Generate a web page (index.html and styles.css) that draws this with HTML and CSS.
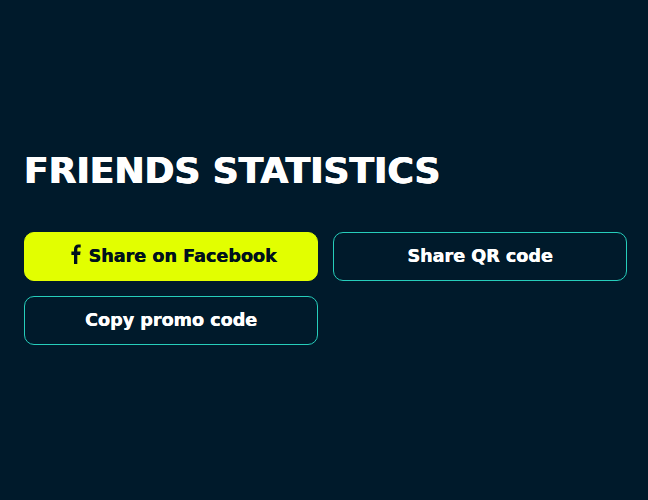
FILE: index.html
```html
<!DOCTYPE html>
<html lang="en">
<head>
  <meta charset="UTF-8">
  <title>Friends Statistics</title>
  <link rel="stylesheet" href="styles.css">
</head>
<body>
  <div class="container">
    <h1>FRIENDS STATISTICS</h1>
    <div class="actions">
      <button class="btn btn-primary">
        <svg class="icon" viewBox="0 0 10 20" width="10" height="20" aria-hidden="true">
          <path d="M3 20V11H0.4V7.6H3V5.2C3 2 4.8 0.4 7.4 0.4C8.5 0.4 9.4 0.5 9.7 0.6V3.6H8C6.7 3.6 6.3 4.2 6.3 5.3V7.6H9.6L9.1 11H6.3V20Z"/>
        </svg>
        Share on Facebook
      </button>
      <button class="btn">Share QR code</button>
      <button class="btn">Copy promo code</button>
    </div>
  </div>
</body>
</html>
```

FILE: styles.css
```css
body {
  margin: 0;
  min-height: 100vh;
  background-color: #001a2b;
  color: #fff;
  font-family: "DejaVu Sans", sans-serif;
}

.container {
  padding: 149px 21px 0 24px;
}

h1 {
  margin: 0 0 39px;
  font-size: 36px;
  line-height: 44px;
  font-weight: 700;
  text-shadow: 0.6px 0 0 #fff, -0.4px 0 0 #fff;
}

.actions {
  display: grid;
  grid-template-columns: 1fr 1fr;
  gap: 15px;
}

.btn {
  display: flex;
  align-items: center;
  justify-content: center;
  gap: 7px;
  height: 49px;
  padding-bottom: 3px;
  background: transparent;
  color: #fff;
  border: 1px solid #26cdbb;
  border-radius: 10px;
  font-family: inherit;
  font-size: 17.6px;
  font-weight: 700;
  text-shadow: 0.4px 0 0 currentColor;
}

.btn-primary {
  padding-left: 12px;
  background: #e2ff00;
  border-color: #e2ff00;
  color: #00111c;
}

.icon {
  fill: #00111c;
  margin-top: -4px;
}
```
